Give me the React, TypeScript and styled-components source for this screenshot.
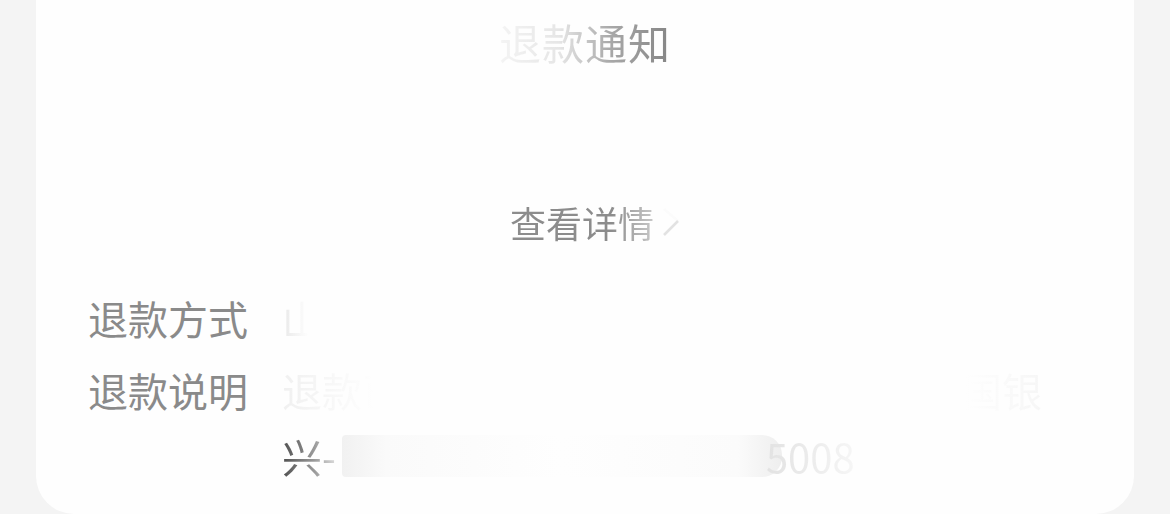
import styled, { createGlobalStyle } from "styled-components";

const GlobalStyle = createGlobalStyle`
  html, body {
    margin: 0;
    padding: 0;
    background: #f4f4f4;
    font-family: "Noto Sans CJK SC", "Noto Sans", sans-serif;
  }
`;

const Page = styled.div`
  width: 1170px;
  height: 514px;
  overflow: hidden;
  background: #f4f4f4;
  padding: 0 36px;
  box-sizing: border-box;
`;

const Card = styled.div`
  height: 514px;
  background: #fefefe;
  border-radius: 0 0 38px 38px;
  padding: 16px 52px 0;
  box-sizing: border-box;
  display: flex;
  flex-direction: column;
`;

// text that fades out along a gradient, as in the washed-out screenshot
const Faded = styled.span<{ $stops: string }>`
  background: linear-gradient(90deg, ${({ $stops }) => $stops});
  -webkit-background-clip: text;
  background-clip: text;
  color: transparent;
`;

const Title = styled.h1`
  margin: 0;
  text-align: center;
  font-size: 42px;
  line-height: 52px;
  font-weight: 400;
  letter-spacing: 1px;
`;

const Summary = styled.div`
  height: 132px;
  display: flex;
  flex-direction: column;
  align-items: center;
  justify-content: center;
  gap: 26px;
  color: #fefefe;
  font-size: 20px;
`;

const DetailLink = styled.a`
  align-self: center;
  display: flex;
  align-items: center;
  gap: 6px;
  font-size: 36px;
  line-height: 44px;
  text-decoration: none;
  margin-left: 22px;
`;

const InfoList = styled.div`
  margin-top: 41px;
  display: flex;
  flex-direction: column;
  gap: 6px;
`;

const Row = styled.div`
  display: grid;
  grid-template-columns: 160px 1fr;
  column-gap: 34px;
  font-size: 40px;
  line-height: 66px;
`;

const Label = styled.span`
  color: #8a8a8a;
  white-space: nowrap;
`;

const Value = styled.div`
  display: flex;
  flex-direction: column;
  min-width: 0;
`;

const Line = styled.div`
  display: flex;
  align-items: center;
  white-space: nowrap;
`;

const Masked = styled.span`
  display: inline-block;
  width: 440px;
  height: 42px;
  margin: 0 -16px 0 6px;
  border-radius: 4px 20px 20px 4px;
  background: linear-gradient(
    90deg,
    #f1f1f1 0%,
    #fafafa 10%,
    #fefefe 50%,
    #fbfbfb 90%,
    #eeeeee 100%
  );
`;

function Chevron() {
  return (
    <svg width="22" height="30" viewBox="0 0 22 30">
      <path d="M4 2 L18 14" stroke="#fbfbfb" strokeWidth="2.5" fill="none" />
      <path d="M18 14 L4 28" stroke="#e2e2e2" strokeWidth="2.5" fill="none" />
    </svg>
  );
}

export default function App() {
  return (
    <Page>
      <GlobalStyle />
      <Card>
        <Title>
          <Faded $stops="#f4f4f4 0%, #e6e6e6 35%, #a8a8a8 65%, #858585 100%">
            退款通知
          </Faded>
        </Title>
        <Summary>
          <span>¥ 0.00</span>
          <span>退款已完成</span>
        </Summary>
        <DetailLink href="#">
          <Faded $stops="#8c8c8c 0%, #8c8c8c 70%, #c8c8c8 100%">
            查看详情
          </Faded>
          <Chevron />
        </DetailLink>
        <InfoList>
          <Row>
            <Label>退款方式</Label>
            <Value>
              <Line>
                <Faded $stops="#e8e8e8 0%, #fefefe 6%, #fefefe 100%">
                  山东农村商业银行储蓄卡
                </Faded>
              </Line>
            </Value>
          </Row>
          <Row>
            <Label>退款说明</Label>
            <Value>
              <Line>
                <Faded $stops="#f0f0f0 0%, #fefefe 12%, #fefefe 90%, #f6f6f6 100%">
                  退款已原路退回，请注意查收退款至中国银
                </Faded>
              </Line>
              <Line>
                <Faded $stops="#505050 0%, #9a9a9a 60%, #dcdcdc 100%">
                  兴-
                </Faded>
                <Masked />
                <Faded $stops="#e2e2e2 0%, #f6f6f6 100%">5008</Faded>
              </Line>
            </Value>
          </Row>
        </InfoList>
      </Card>
    </Page>
  );
}
